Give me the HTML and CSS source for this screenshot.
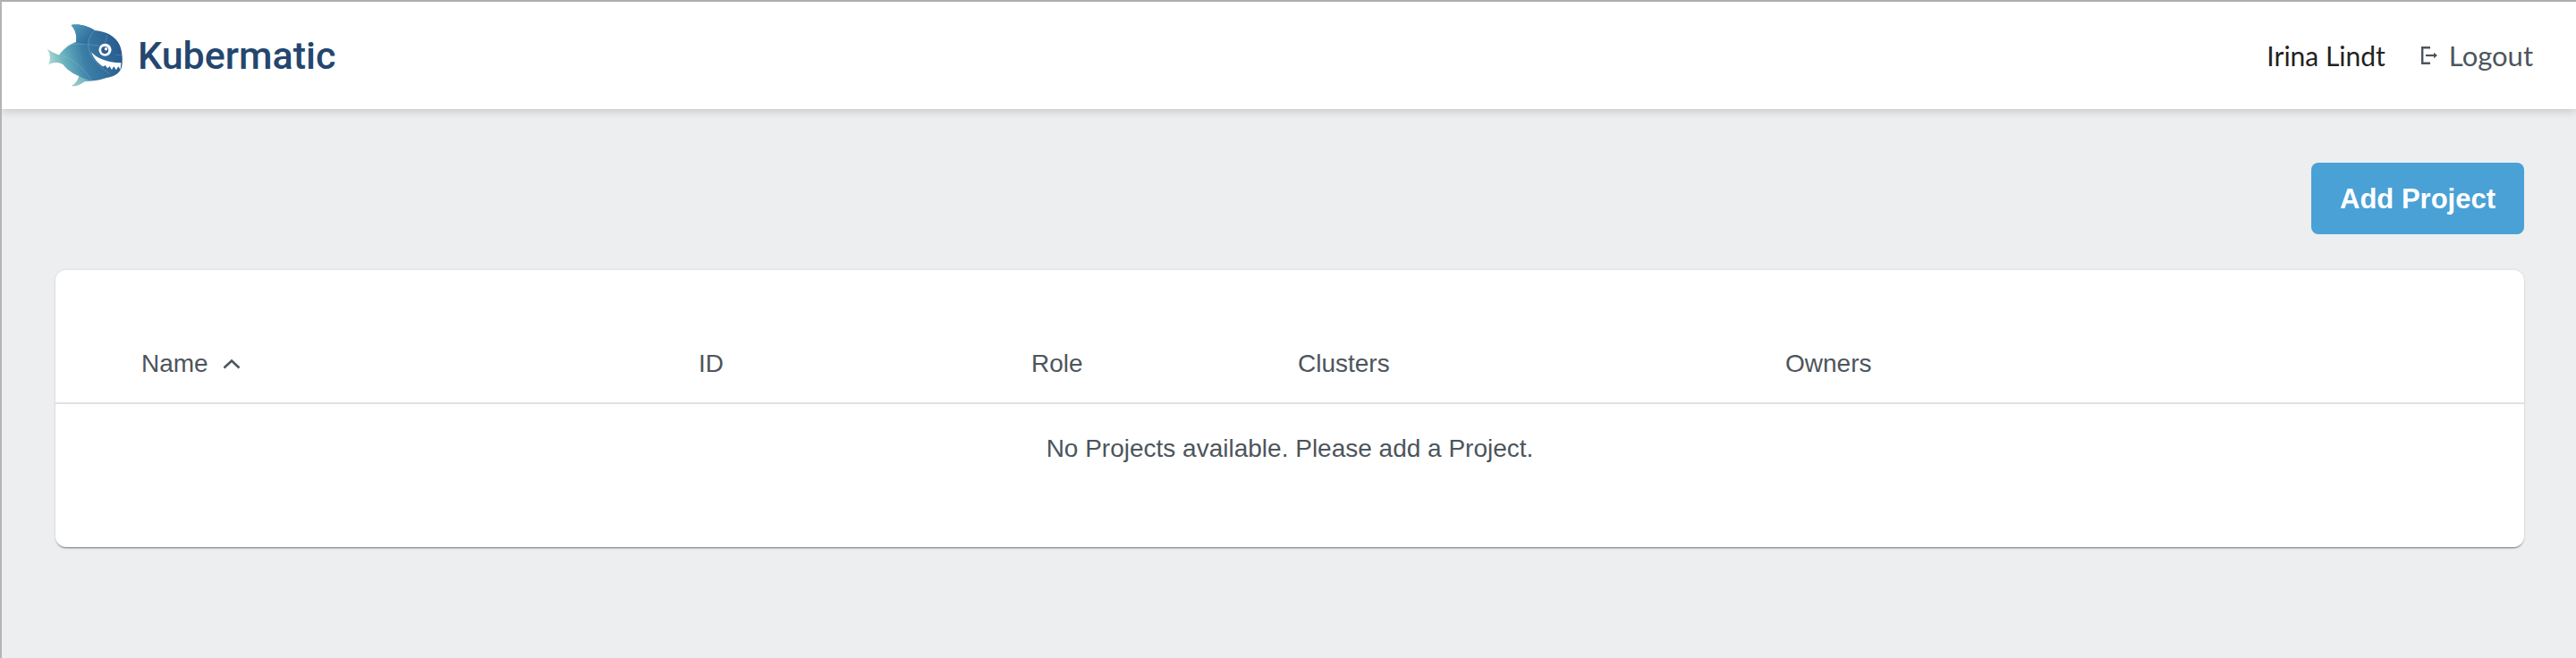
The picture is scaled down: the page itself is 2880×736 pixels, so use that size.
FILE: index.html
```html
<!DOCTYPE html>
<html lang="en">
<head>
  <meta charset="UTF-8" />
  <meta name="viewport" content="width=device-width, initial-scale=1.0"/>
  <title>Kubermatic</title>
  <link rel="stylesheet" href="styles.css">
</head>
<body>
  <header class="topbar">
    <div class="brand">
      <svg class="brand-logo" viewBox="40 25 256 210" aria-hidden="true">
        <defs>
          <linearGradient id="fishFill" gradientUnits="userSpaceOnUse" x1="45" y1="170" x2="290" y2="110">
            <stop offset="0" stop-color="#b5ddd3"/>
            <stop offset="0.22" stop-color="#6db5c0"/>
            <stop offset="0.5" stop-color="#3b7ea6"/>
            <stop offset="1" stop-color="#275a8f"/>
          </linearGradient>
          <linearGradient id="finFill" gradientUnits="userSpaceOnUse" x1="120" y1="235" x2="190" y2="170">
            <stop offset="0" stop-color="#a9dad0"/>
            <stop offset="1" stop-color="#4a97b3"/>
          </linearGradient>
          <linearGradient id="topFin" gradientUnits="userSpaceOnUse" x1="122" y1="30" x2="190" y2="90">
            <stop offset="0" stop-color="#4f9dbb"/>
            <stop offset="1" stop-color="#2a6295"/>
          </linearGradient>
        </defs>
        <path fill="url(#fishFill)" d="M122 27 C150 22 178 30 200 45 C235 48 270 62 284 95 C293 118 295 150 289 172 C280 192 262 200 240 203 C215 213 180 214 164 216 C152 226 138 231 124 230 C136 222 146 212 148 197 C128 190 108 176 96 160 C84 150 66 150 46 159 C54 145 54 125 42 107 C58 118 72 124 82 127 C96 108 118 90 138 84 C142 62 136 42 122 27 Z"/>
        <path fill="url(#topFin)" d="M122 27 C150 22 178 30 200 45 C180 68 172 85 180 96 C165 90 150 86 138 84 C142 62 136 42 122 27 Z"/>
        <path fill="url(#finFill)" d="M124 230 C136 222 146 212 148 197 C156 202 170 208 188 212 C178 214 170 215 164 216 C152 226 138 231 124 230 Z"/>
        <g fill="none" stroke="#a9cfe0" stroke-width="1.2" opacity="0.7">
          <path d="M200 45 C178 70 172 88 186 122"/>
          <path d="M96 100 C130 84 170 92 216 96"/>
          <path d="M92 128 C130 140 170 180 190 212"/>
          <path d="M250 190 C215 165 190 140 186 122"/>
          <path d="M240 60 C240 68 240 78 234 86"/>
          <path d="M270 125 C278 128 284 128 291 128"/>
        </g>
        <circle cx="235" cy="110" r="21" fill="#fff"/>
        <circle cx="234" cy="111" r="12" fill="#2f5f92"/>
        <circle cx="238" cy="107" r="5" fill="#fff"/>
        <path fill="#fff" d="M189 117 C205 135 240 153 288 153 L286 176 L279 165 L272 177 L264 165 L257 176 L250 164 L243 172 L236 161 L229 166 C212 155 196 138 189 117 Z"/>
      </svg>
      <span class="brand-name">Kubermatic</span>
    </div>
    <nav class="user-nav">
      <span class="user-name">Irina Lindt</span>
      <a class="logout" href="#">
        <svg class="logout-icon" viewBox="0 0 18 20" aria-hidden="true">
          <path d="M10 1.200H1.200V18.800H10" fill="none" stroke="currentColor" stroke-width="2.400"/>
          <path d="M5 10H15" fill="none" stroke="currentColor" stroke-width="2.200"/>
          <path d="M14 6.800L18 10L14 13.200Z" fill="currentColor"/>
        </svg>
        <span>Logout</span>
      </a>
    </nav>
  </header>

  <main class="content">
    <div class="actions">
      <button class="btn-add">Add Project</button>
    </div>

    <section class="card">
      <div class="table-head">
        <div class="col-name">
          Name
          <svg class="sort-icon" viewBox="0 0 20 12" aria-hidden="true">
            <path d="M1.500 10.500L10 2.500L18.500 10.500" fill="none" stroke="currentColor" stroke-width="2.600"/>
          </svg>
        </div>
        <div>ID</div>
        <div>Role</div>
        <div>Clusters</div>
        <div>Owners</div>
      </div>
      <p class="empty">No Projects available. Please add a Project.</p>
    </section>
  </main>
</body>
</html>
```

FILE: styles.css
```css
body {
  margin: 0;
  height: 734px;
  overflow: hidden;
  background-color: #edeef0;
  border-top: 2px solid #aeaeae;
  border-left: 2px solid #b4b4b6;
  font-family: "Liberation Sans", Arial, sans-serif;
  color: #4d555c;
}

.topbar {
  display: flex;
  align-items: center;
  justify-content: space-between;
  height: 120px;
  padding: 0 48px 0 50px;
  background-color: #fff;
  box-shadow: 0 2px 10px rgba(0, 0, 0, 0.18);
}

.brand {
  display: flex;
  align-items: center;
  gap: 16px;
}

.brand-logo {
  width: 86px;
  height: 71px;
}

.brand-name {
  font-family: Roboto, sans-serif;
  font-size: 43px;
  font-weight: 500;
  color: #24466f;
}

.user-nav {
  display: flex;
  align-items: center;
  gap: 40px;
  font-family: Lato, sans-serif;
  font-size: 31px;
}

.user-name {
  font-size: 30px;
  color: #222;
}

.logout {
  display: flex;
  align-items: center;
  gap: 13px;
  color: #4d555c;
  text-decoration: none;
}

.logout-icon {
  width: 18px;
  height: 20px;
}

.content {
  padding: 60px 58px 0 60px;
}

.actions {
  display: flex;
  justify-content: flex-end;
  margin-bottom: 40px;
}

.btn-add {
  width: 238px;
  height: 80px;
  padding: 2px 0 0;
  border: none;
  border-radius: 8px;
  background-color: #4aa1d6;
  color: #fff;
  font-family: "Liberation Sans", Arial, sans-serif;
  font-size: 31px;
  font-weight: bold;
}

.card {
  height: 310px;
  background-color: #fff;
  border-radius: 12px;
  box-shadow: 0 2px 2px -1px rgba(0, 0, 0, 0.5), 0 0 3px rgba(0, 0, 0, 0.1);
}

.table-head {
  display: grid;
  grid-template-columns: 623px 372px 298px 545px 1fr;
  align-items: center;
  height: 86px;
  padding: 62px 0 0 96px;
  border-bottom: 2px solid #e2e2e2;
  font-size: 28px;
}

.col-name {
  display: flex;
  align-items: center;
  gap: 16px;
}

.sort-icon {
  width: 20px;
  height: 12px;
}

.empty {
  margin: 34px 0 0;
  text-align: center;
  font-size: 28px;
}
```
